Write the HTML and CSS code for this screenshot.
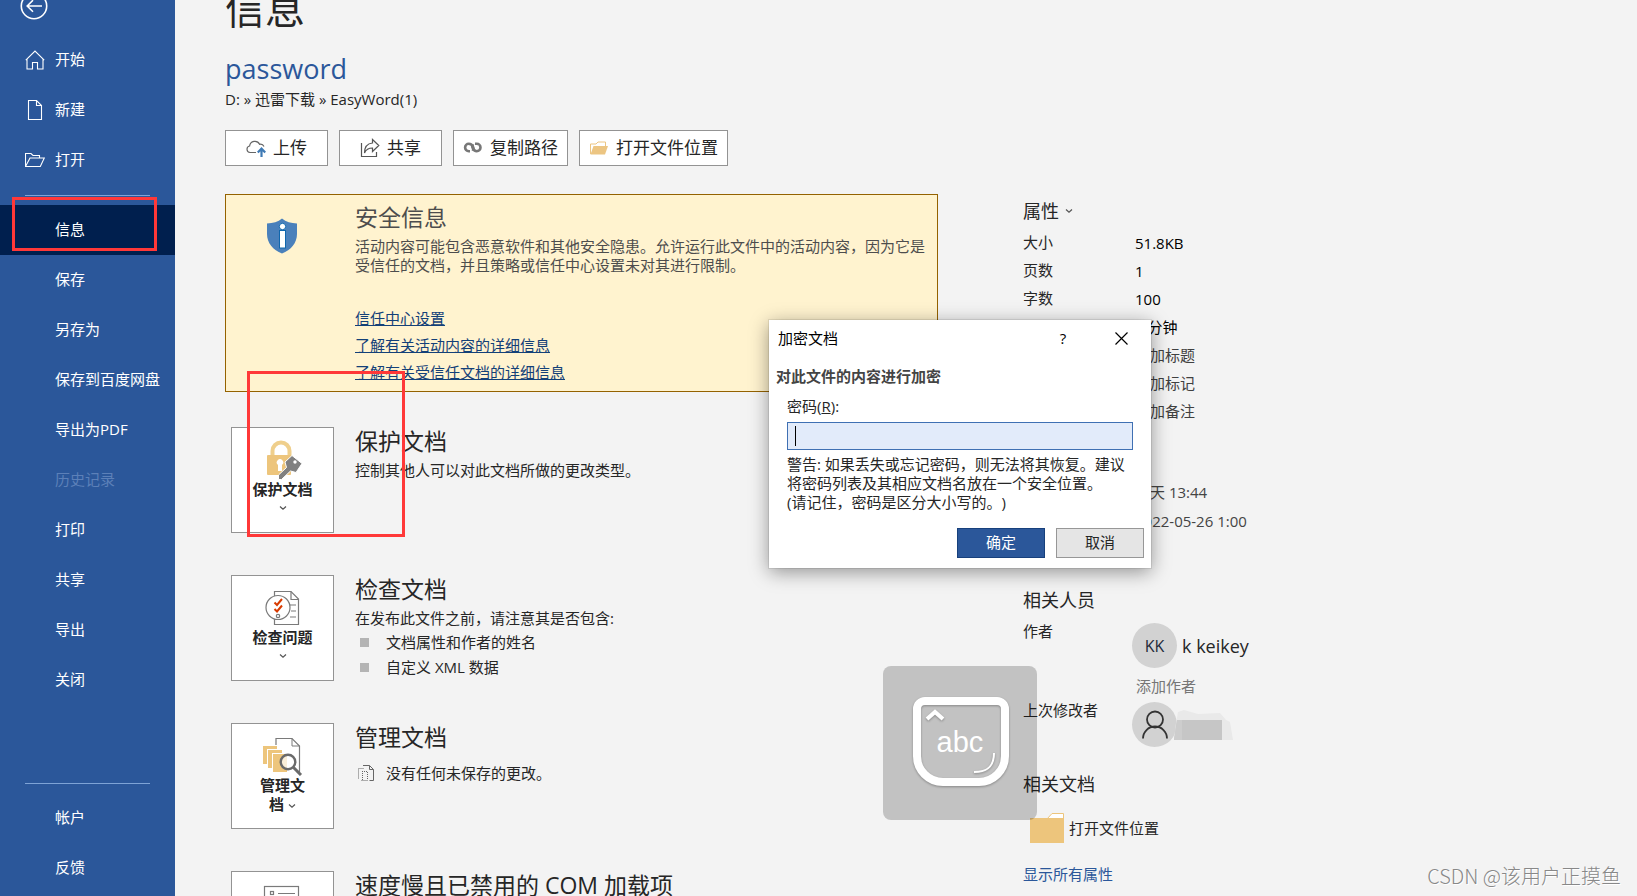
FILE: index.html
```html
<!DOCTYPE html>
<html lang="zh-CN">
<head>
<meta charset="utf-8">
<title>信息 - password</title>
<link rel="stylesheet" href="styles.css">
</head>
<body>
<div class="app">
  <nav class="sidebar">
    <button class="back" aria-label="返回">
      <svg width="28" height="28" viewBox="0 0 28 28" fill="none" stroke="#fff" stroke-width="1.6"><circle cx="14" cy="14" r="12.7"/><path d="M22 14H7.500M13 8.200L7.200 14L13 19.800"/></svg>
    </button>
    <a class="nav-item" href="#"><svg width="20" height="20" viewBox="0 0 20 20" fill="none" stroke="#fff" stroke-width="1.100"><path d="M.8 10.200L10 1L19.200 10.200M2 9.300V19H7.500V12.500H12.500V19H18V9.300"/></svg>开始</a>
    <a class="nav-item" href="#"><svg width="20" height="20" viewBox="0 0 20 20" fill="none" stroke="#fff" stroke-width="1.100"><path d="M3.500.5H11.500L16.500 5.500V19.500H3.500ZM11.500.5V5.500H16.500"/></svg>新建</a>
    <a class="nav-item" href="#"><svg width="20" height="20" viewBox="0 0 20 20" fill="none" stroke="#fff" stroke-width="1.100"><path d="M.5 16.500V3.500H6L8 5.500H14.500V8M.5 16.500L5 8H19.300L15.300 16.500Z"/></svg>打开</a>
    <hr class="rule">
    <a class="nav-item active" href="#" aria-current="page">信息</a>
    <a class="nav-item" href="#">保存</a>
    <a class="nav-item" href="#">另存为</a>
    <a class="nav-item" href="#">保存到百度网盘</a>
    <a class="nav-item" href="#">导出为PDF</a>
    <a class="nav-item disabled" href="#" aria-disabled="true">历史记录</a>
    <a class="nav-item" href="#">打印</a>
    <a class="nav-item" href="#">共享</a>
    <a class="nav-item" href="#">导出</a>
    <a class="nav-item" href="#">关闭</a>
    <div class="nav-foot">
      <hr class="rule">
      <a class="nav-item" href="#">帐户</a>
      <a class="nav-item" href="#">反馈</a>
    </div>
  </nav>

  <main class="main">
    <h1 class="page-title">信息</h1>
    <h2 class="doc-name">password</h2>
    <p class="doc-path">D: » 迅雷下载 » EasyWord(1)</p>
    <div class="toolbar">
      <button class="tool"><svg width="20" height="20" viewBox="0 0 20 20" fill="none"><path d="M10 14.500H4A3.300 3.300 0 0 1 3.600 8A5.300 5.300 0 0 1 13.600 6.300A4 4 0 0 1 18 8.500" stroke="#666" stroke-width="1.200"/><path d="M15.500 19V11M11.800 14.500L15.500 10.500L19.200 14.500" stroke="#3f7ab5" stroke-width="2.200"/></svg>上传</button>
      <button class="tool"><svg width="20" height="20" viewBox="0 0 20 20" fill="none" stroke="#555" stroke-width="1.200"><path d="M1.500 5V18.500H16.500V14"/><path d="M12.500 1.500L18.800 7.500L12.500 13.500V10C8.500 10 6 11.500 4.500 15C4.500 9 7.500 5.500 12.500 5Z"/></svg>共享</button>
      <button class="tool"><svg width="20" height="20" viewBox="0 0 20 20" fill="none" stroke="#777" stroke-width="2.600"><path d="M7 13.200H5.800A3.700 3.700 0 0 1 5.800 5.800C8.500 5.800 9.300 7 10.200 9.300C10.800 10.800 11 12 9 11.300"/><path d="M12 5.800H13.800A3.700 3.700 0 0 1 13.800 13.200C11.300 13.200 10.500 12 9.600 9.700C9 8.200 8.900 7 10.800 7.700"/></svg>复制路径</button>
      <button class="tool"><svg width="20" height="20" viewBox="0 0 20 20"><path d="M1.500 16V6H7L9 4H16.500V8" fill="none" stroke="#ecc582"/><path d="M1.500 16.500L4.500 8H19L16 16.500Z" fill="#ecc582"/></svg>打开文件位置</button>
    </div>

    <div class="columns">
      <div class="left">
        <section class="banner">
          <div class="banner-icon"><svg width="32" height="36" viewBox="0 0 32 36"><path d="M16 .5C12 4 7 5 1 5.500V16C1 25 7 32 16 35.500C25 32 31 25 31 16V5.500C25 5 20 4 16 .5Z" fill="#4a80bb"/><g fill="#fff" stroke="#0f66ad"><circle cx="16.500" cy="8.500" r="3.200"/><rect x="13.500" y="12.500" width="6" height="17.500"/></g></svg></div>
          <div class="banner-text">
            <h3 class="section-title">安全信息</h3>
            <p class="text">活动内容可能包含恶意软件和其他安全隐患。允许运行此文件中的活动内容，因为它是受信任的文档，并且策略或信任中心设置未对其进行限制。</p>
            <div class="banner-links">
              <a href="#">信任中心设置</a>
              <a href="#">了解有关活动内容的详细信息</a>
              <a href="#">了解有关受信任文档的详细信息</a>
            </div>
          </div>
        </section>

        <section class="block">
          <button class="tile">
            <svg width="40" height="40" viewBox="0 0 40 40"><path d="M9.500 17V11A8.500 8.500 0 0 1 26.500 11V17" fill="none" stroke="#efcf8c" stroke-width="4"/><rect x="4" y="15" width="24" height="20" rx="1" fill="#edc57c"/><path d="M15 31V25A3.200 3.200 0 1 1 19 25V31Z" fill="#fff"/><path d="M29 15.500L39 23.500L33 32.500L27.500 31L18.500 39.500H15.500V35L23.500 27.500L22 22Z" fill="#808080" stroke="#fff"/><circle cx="32" cy="22" r="1.700" fill="#fff"/></svg>
            <span>保护文档</span>
            <svg class="chev" width="8" height="6" viewBox="0 0 8 6"><path d="M1 1.500L4 4.300L7 1.500"/></svg>
          </button>
          <div class="block-text">
            <h3 class="section-title">保护文档</h3>
            <p class="text">控制其他人可以对此文档所做的更改类型。</p>
          </div>
        </section>

        <section class="block">
          <button class="tile">
            <svg width="40" height="40" viewBox="0 0 40 40" fill="none" stroke="#7a7a7a" stroke-width="1.200"><path d="M11.500 3.500H28L35.500 11V36.500H11.500Z" fill="#fff"/><path d="M28 3.500V11.500H35.500M27 17H33M28 23H33M27 29H33"/><circle cx="15" cy="19.500" r="12" fill="#fff"/><path d="M11.500 14.500L14 17L19 11M11.500 21L14 23.500L19 17.500" stroke="#d83b01" stroke-width="2"/><circle cx="15" cy="28" r="1.700"/></svg>
            <span>检查问题</span>
            <svg class="chev" width="8" height="6" viewBox="0 0 8 6"><path d="M1 1.500L4 4.300L7 1.500"/></svg>
          </button>
          <div class="block-text">
            <h3 class="section-title">检查文档</h3>
            <p class="text">在发布此文件之前，请注意其是否包含:</p>
            <ul class="bullets">
              <li>文档属性和作者的姓名</li>
              <li>自定义 XML 数据</li>
            </ul>
          </div>
        </section>

        <section class="block">
          <button class="tile">
            <svg width="40" height="40" viewBox="0 0 40 40"><path d="M13 9V2.500H29L36.500 10V36" fill="none" stroke="#7a7a7a" stroke-width="1.200"/><path d="M29 2.500V10H36.500" fill="none" stroke="#7a7a7a"/><path d="M0 10H14V13H4V28H0ZM5 14H19V17H9V32H5ZM10 18H24V36H10Z" fill="#edc57c"/><circle cx="25" cy="26" r="7.300" fill="#fff" fill-opacity=".7" stroke="#6a6a6a" stroke-width="2.400"/><path d="M30.500 31.500L38 39" stroke="#6a6a6a" stroke-width="3"/></svg>
            <span>管理文<br>档 <svg class="chev" width="8" height="6" viewBox="0 0 8 6"><path d="M1 1.500L4 4.300L7 1.500"/></svg></span>
          </button>
          <div class="block-text">
            <h3 class="section-title">管理文档</h3>
            <p class="versions"><svg width="16" height="16" viewBox="0 0 16 16" fill="none" stroke="#666"><path d="M5 .5H11.500L15.500 4.500V15.500H11.500M11.500.5V4.500H15.500"/><path d="M5.500 3.500H.5V14.500M3.500 15.500H10M4 6.500H9.500V15M4.500 6V15" stroke-dasharray="1 1"/></svg>没有任何未保存的更改。</p>
          </div>
        </section>

        <section class="block">
          <button class="tile" aria-label="管理 COM 加载项">
            <svg width="40" height="40" viewBox="0 0 40 40" fill="none" stroke="#7a7a7a" stroke-width="1.200"><rect x="1.500" y="2.500" width="34" height="30"/><rect x="7.500" y="7.500" width="3" height="3"/><path d="M15 9.500H32M15 17.500H32"/></svg>
          </button>
          <div class="block-text">
            <h3 class="section-title">速度慢且已禁用的 COM 加载项</h3>
          </div>
        </section>
      </div>

      <aside class="props">
        <button class="props-title">属性 <svg class="chev" width="8" height="6" viewBox="0 0 8 6"><path d="M1 1.500L4 4.300L7 1.500"/></svg></button>
        <dl class="stats">
          <div><dt>大小</dt><dd>51.8KB</dd></div>
          <div><dt>页数</dt><dd>1</dd></div>
          <div><dt>字数</dt><dd>100</dd></div>
          <div><dt></dt><dd>0 分钟</dd></div>
          <div class="soft"><dt></dt><dd>添加标题</dd></div>
          <div class="soft"><dt></dt><dd>添加标记</dd></div>
          <div class="soft"><dt></dt><dd>添加备注</dd></div>
        </dl>
        <dl class="dates">
          <div><dt></dt><dd>今天 13:44</dd></div>
          <div><dt></dt><dd>2022-05-26 1:00</dd></div>
        </dl>
        <h4 class="props-title people-title">相关人员</h4>
        <dl class="people">
          <div><dt>作者</dt><dd>
            <div class="person"><span class="avatar">KK</span><span class="name">k keikey</span></div>
            <a class="add" href="#">添加作者</a>
          </dd></div>
          <div><dt>上次修改者</dt><dd>
            <div class="person"><span class="avatar"><svg width="28" height="30" viewBox="0 0 28 30" fill="none" stroke="#333" stroke-width="1.800"><circle cx="14" cy="9.500" r="8"/><path d="M2 28.500A12 12 0 0 1 26 28.500"/></svg></span><svg class="smudge" width="60" height="32" viewBox="0 0 60 32"><path d="M4 3L10 1L24 5L46 4L52 11L56 13L59 31H0L2 14Z" fill="#e9e9e9"/><path d="M3 11H48V31H0Z" fill="#c6c6c6"/><path d="M3 11H8V31H0Z" fill="#cdcdcd"/></svg></div>
          </dd></div>
        </dl>
        <h4 class="props-title docs-title">相关文档</h4>
        <a class="open-place" href="#"><svg width="34" height="30" viewBox="0 0 34 30"><path d="M17 6L22 .5H33.500V6Z" fill="#fff" stroke="#edc57c"/><path d="M0 5H34V30H0Z" fill="#edc57c"/></svg>打开文件位置</a>
        <a class="show-all" href="#">显示所有属性</a>
      </aside>
    </div>
  </main>

  <div class="mark mark-nav"></div>
  <div class="mark mark-protect"></div>

  <div class="ime">
    <svg width="154" height="154" viewBox="0 0 154 154" fill="none" stroke="#fff"><path d="M42 35H114A8 8 0 0 1 122 43V90A26 26 0 0 1 96 116H60A26 26 0 0 1 34 90V43A8 8 0 0 1 42 35Z" stroke-width="8"/><path d="M44 53L52 46L60 53" stroke-width="4"/><path d="M111 87C111 100 105 106 91 106" stroke-width="2"/></svg>
    <span>abc</span>
  </div>

  <div class="dialog" role="dialog" aria-labelledby="dlg-title">
    <div class="dialog-bar">
      <span id="dlg-title">加密文档</span>
      <button class="dialog-help" aria-label="帮助">?</button>
      <button class="dialog-close" aria-label="关闭"><svg width="13" height="13" viewBox="0 0 13 13" stroke="#000" stroke-width="1.200"><path d="M.5.5L12.500 12.500M12.500.5L.5 12.500"/></svg></button>
    </div>
    <h3 class="dialog-heading">对此文件的内容进行加密</h3>
    <div class="dialog-body">
      <label for="pwd">密码(<u>R</u>):</label>
      <input id="pwd" type="password">
      <p>警告: 如果丢失或忘记密码，则无法将其恢复。建议将密码列表及其相应文档名放在一个安全位置。<br>(请记住，密码是区分大小写的。)</p>
    </div>
    <div class="dialog-actions">
      <button class="primary">确定</button>
      <button class="secondary">取消</button>
    </div>
  </div>

  <div class="watermark">CSDN @该用户正摸鱼</div>
</div>
</body>
</html>
```
FILE: styles.css
```css
* { box-sizing: border-box; }
body, h1, h2, h3, h4, p, ul, dl, dd { margin: 0; padding: 0; font-weight: 400; }
body {
  font-family: "Open Sans", "Noto Sans CJK SC", sans-serif;
  font-size: 15px;
  line-height: 20px;
  color: #262626;
  background: #f3f3f3;
  text-spacing-trim: space-all;
}
button { font: inherit; color: inherit; padding: 0; border: 0; background: none; }
a { color: inherit; text-decoration: none; }
svg { flex: none; display: block; }
.chev { fill: none; stroke: #555; stroke-width: 1.2px; }

.app { position: relative; display: flex; height: 100vh; overflow: hidden; }

.sidebar {
  flex: none;
  width: 175px;
  display: flex;
  flex-direction: column;
  padding-bottom: 3px;
  background: #2b579a;
  color: #fff;
}
.back { width: 28px; height: 28px; margin: -8px 0 15px 20px; flex: none; }
.nav-item { display: flex; align-items: center; flex: none; height: 50px; padding: 0 0 2px 55px; }
.nav-item svg { margin: 2px 10px 0 -30px; }
.active { background: #001f4e; }
.disabled { color: #5c80b8; }
.rule { flex: none; width: 125px; height: 1px; margin: 10px 25px 9px; border: 0; background: #7ea3d6; }
.nav-foot { margin-top: auto; }
.nav-foot .rule { margin: 0 25px 9px; }

.main { flex: 1; min-width: 0; padding-left: 50px; }
.page-title { margin-top: -17px; font-size: 40px; line-height: 52px; }
.doc-name { margin-top: 14px; font-size: 27px; line-height: 40px; color: #2b579a; }
.toolbar { display: flex; gap: 11px; margin: 21px 0 28px; }
.tool {
  display: flex;
  align-items: center;
  justify-content: center;
  gap: 7px;
  min-width: 103px;
  height: 36px;
  padding: 0 9px;
  font-size: 17px;
  background: #fff;
  border: 1px solid #939393;
}
.columns { display: flex; gap: 85px; }
.left { flex: 0 1 713px; }

.banner {
  display: flex;
  min-height: 198px;
  margin-bottom: 35px;
  padding: 8px 10px 5px 0;
  color: #4d4d4d;
  background: #fff3cf;
  border: 1px solid #946200;
}
.banner-icon { flex: none; width: 129px; padding: 15px 0 0 40px; }
.section-title { font-size: 23px; line-height: 28px; }
.text { line-height: 19px; margin-top: 6px; }
.banner-links { display: flex; flex-direction: column; align-items: flex-start; margin-top: 30px; }
.banner-links a { line-height: 27px; color: #134078; text-decoration: underline; }

.block { display: flex; gap: 21px; height: 106px; margin: 0 0 42px 6px; }
.tile {
  flex: none;
  display: flex;
  flex-direction: column;
  align-items: center;
  justify-content: flex-start;
  width: 103px;
  height: 106px;
  padding-top: 12px;
  line-height: 19px;
  font-weight: 700;
  background: #fff;
  border: 1px solid #939393;
}
.tile > .chev { margin-top: 6px; }
.tile span .chev { display: inline-block; vertical-align: middle; }
.bullets { list-style: none; margin-top: 2px; }
.bullets li { display: flex; align-items: center; gap: 17px; padding-left: 5px; line-height: 25px; }
.bullets li::before { content: ""; width: 9px; height: 9px; background: #b4b4b4; }
.versions { display: flex; align-items: center; gap: 12px; margin: 7px 0 0 3px; line-height: 30px; }

.props { flex: none; padding-top: 5px; }
.props-title { display: flex; align-items: center; gap: 6px; font-size: 18px; line-height: 24px; }
.props dl > div { display: flex; }
.props dt { flex: none; width: 112px; }
.stats { margin-top: 5px; color: #262626; }
.stats > div { height: 28px; line-height: 28px; }
.stats dd { color: #000; padding-top: 1px; }
.stats .soft dd { color: #404040; }
.dates { margin-top: 54px; color: #444; }
.dates > div { height: 29px; line-height: 29px; }
.people-title { margin-top: 52px; }
.people { margin-top: 9px; display: grid; gap: 4px; }
.props .people dt { width: 109px; }
.person { display: flex; align-items: center; padding-top: 2px; }
.avatar {
  display: flex;
  align-items: center;
  justify-content: center;
  width: 45px;
  height: 45px;
  border-radius: 50%;
  background: #d2d2d2;
  color: #1e2a3a;
  font-size: 16px;
}
.name { padding-left: 5px; font-size: 18px; }
.smudge { margin-left: -3px; }
.add { display: block; margin-top: 8px; padding-left: 4px; color: #767676; }
.docs-title { margin-top: 25px; }
.open-place { display: flex; align-items: center; gap: 5px; margin: 17px 0 21px 7px; }
.show-all { color: #2b579a; }

.mark { position: absolute; border: 3px solid #ff3838; }
.mark-nav { left: 12px; top: 197px; width: 145px; height: 54px; }
.mark-protect { left: 247px; top: 371px; width: 158px; height: 166px; }

.ime {
  position: absolute;
  left: 883px;
  top: 666px;
  width: 154px;
  height: 154px;
  border-radius: 8px;
  background: rgba(0, 0, 0, .2);
}
.ime svg { filter: drop-shadow(0 1px 1px rgba(0, 0, 0, .3)); }
.ime span {
  position: absolute;
  left: 0;
  right: 0;
  top: 60px;
  text-align: center;
  font: 29px/32px "Liberation Sans", sans-serif;
  color: #fff;
}

.dialog {
  position: absolute;
  left: 769px;
  top: 320px;
  width: 382px;
  padding-bottom: 10px;
  background: #fff;
  box-shadow: 0 0 0 1px rgba(0, 0, 0, .08), 0 4px 18px rgba(0, 0, 0, .4);
}
.dialog-bar { display: flex; align-items: center; height: 36px; padding-left: 9px; color: #000; }
.dialog-help { margin-left: auto; width: 56px; height: 36px; }
.dialog-close { display: flex; align-items: center; justify-content: center; width: 60px; height: 36px; }
.dialog-heading { margin-top: 10px; padding-left: 7px; font-size: 15px; font-weight: 700; color: #444; }
.dialog-body { padding: 10px 18px 0; }
.dialog-body label { display: block; }
.dialog-body input {
  display: block;
  width: 100%;
  height: 28px;
  margin: 6px 0 5px;
  padding: 0 8px;
  font: inherit;
  border: 1px solid #3f70b3;
  border-radius: 0;
  outline: 0;
  background: linear-gradient(#000, #000) 7px 3px / 1px 20px no-repeat, #e2ebfa;
}
.dialog-body p { line-height: 19px; }
.dialog-actions { display: flex; justify-content: flex-end; gap: 11px; margin-top: 16px; padding-right: 7px; }
.dialog-actions button { width: 88px; height: 30px; padding-bottom: 2px; border: 1px solid #979797; background: #e5e5e5; }
.dialog-actions .primary { color: #fff; background: #2b579a; border-color: #17407c; }

.watermark {
  position: absolute;
  right: 16px;
  bottom: 8px;
  font: 300 20px/24px "Noto Sans CJK SC", sans-serif;
  color: #888;
  text-shadow: 1px 1px 0 #fff;
}
```
